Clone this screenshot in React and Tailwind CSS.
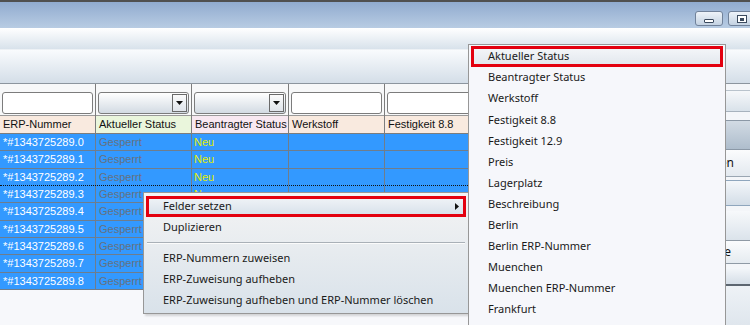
import React from "react";

const cols = [
  { w: "w-[96px]", label: "ERP-Nummer", bg: "bg-[#f9eadf]", kind: "input" },
  { w: "w-[96px]", label: "Aktueller Status", bg: "bg-[#eaf6dc]", kind: "combo" },
  { w: "w-[97px]", label: "Beantragter Status", bg: "bg-[#f8e8f1]", kind: "combo" },
  { w: "w-[96px]", label: "Werkstoff", bg: "bg-[#f9eadf]", kind: "input" },
  { w: "w-[200px]", label: "Festigkeit 8.8", bg: "bg-[#f9eadf]", kind: "input" },
];

const subItems = [
  "Aktueller Status",
  "Beantragter Status",
  "Werkstoff",
  "Festigkeit 8.8",
  "Festigkeit 12.9",
  "Preis",
  "Lagerplatz",
  "Beschreibung",
  "Berlin",
  "Berlin ERP-Nummer",
  "Muenchen",
  "Muenchen ERP-Nummer",
  "Frankfurt",
];

function FilterBox({ kind }) {
  if (kind === "combo") {
    return (
      <div className="flex-1 h-[22px] rounded-[3px] border border-[#7c7c7c] bg-gradient-to-b from-[#ffffff] to-[#d3dbe3] flex justify-end items-center pr-[1px]">
        <div className="w-[15px] h-[18px] border border-[#6a6a6a] bg-gradient-to-b from-[#fbfbfb] to-[#dfe4ea] flex items-center justify-center">
          <svg width="7" height="4" viewBox="0 0 7 4">
            <path d="M0 0h7L3.5 4z" fill="#111" />
          </svg>
        </div>
      </div>
    );
  }
  return <div className="flex-1 h-[22px] rounded-[3px] border border-[#7c7c7c] bg-white" />;
}

function WinButton({ children }) {
  return (
    <div className="w-[28px] h-[15px] shrink-0 rounded-[3px] border border-[#71829a] bg-gradient-to-b from-[#eef3f9] to-[#c4d2e2] flex items-end justify-center pb-[2px]">
      {children}
    </div>
  );
}

export default function App() {
  const rows = Array.from({ length: 9 }, (_, i) => i);
  return (
    <div className="relative w-[750px] h-[325px] overflow-hidden bg-[#f7f8fb] flex flex-col font-['Liberation_Sans',Arial,sans-serif]">
      {/* top frame */}
      <div className="h-[2px] shrink-0 bg-[#505050]" />
      <div className="h-[26px] shrink-0 bg-gradient-to-b from-[#91abcf] to-[#b8cce3] flex justify-end items-start pt-[9px] gap-[5px] -mr-[6px]">
        <WinButton>
          <div className="w-[10px] h-[4px] rounded-[1px] border border-[#3b4a5e] bg-white" />
        </WinButton>
        <WinButton>
          <div className="w-[10px] h-[8px] border border-[#3b4a5e] bg-white flex items-center justify-center">
            <div className="w-[4px] h-[3px] bg-[#3b4a5e]" />
          </div>
        </WinButton>
      </div>
      <div className="h-[22px] shrink-0 bg-gradient-to-b from-[#ffffff] to-[#d8e2eb] border-b border-[#edf1f5]" />
      <div className="h-[34px] shrink-0 bg-gradient-to-b from-[#f9fbfd] to-[#d4dee8] border-b border-[#8c959e]" />

      {/* main */}
      <div className="flex-1 flex min-h-0">
        <div className="flex-1 flex flex-col min-w-0 overflow-hidden">
          {/* header */}
          <div className="flex shrink-0 bg-[#f7f8f9]">
            {cols.map((c, i) => (
              <div key={i} className={`${c.w} shrink-0 flex flex-col border-r border-[#7d7d7d]`}>
                <div className="h-[31px] flex items-end px-[2px] pb-[1px]">
                  <FilterBox kind={c.kind} />
                </div>
                <div className={`h-[18px] ${c.bg} border-t border-[#9a9a9a] flex items-center pl-[3px] text-[11px] text-[#111] whitespace-nowrap`}>
                  {c.label}
                </div>
              </div>
            ))}
          </div>
          {/* rows */}
          <div className="flex flex-col border-t border-[#7d7d7d]">
            {rows.map((i) => (
              <div
                key={i}
                className={`flex h-[17.33px] shrink-0 bg-[#3399ff] border-b text-[11px] whitespace-nowrap ${
                  i === 2 ? "border-dotted border-[#111]" : "border-[#6f7d8b]"
                }`}
              >
                <div className="w-[96px] shrink-0 border-r border-[#6f7d8b] pl-[3px] flex items-center text-white">
                  *#1343725289.{i}
                </div>
                <div className="w-[96px] shrink-0 border-r border-[#6f7d8b] pl-[3px] flex items-center text-[#66717e]">
                  Gesperrt
                </div>
                <div className="w-[97px] shrink-0 border-r border-[#6f7d8b] pl-[2px] flex items-center text-[#e4ee00]">
                  Neu
                </div>
                <div className="w-[96px] shrink-0 border-r border-[#6f7d8b]" />
                <div className="w-[200px] shrink-0 border-r border-[#6f7d8b]" />
              </div>
            ))}
          </div>
        </div>

        {/* right side panel (mostly covered) */}
        <div className="w-[90px] shrink-0 flex flex-col border-l border-[#8c959e] bg-[#f4f6f9] text-[12px] text-[#111] font-['Noto_Sans',sans-serif] whitespace-nowrap">
          <div className="h-[7px] border-b border-[#b9c3cc]" />
          <div className="h-[21px] bg-gradient-to-b from-[#f6f8fa] to-[#d9e2ea] border-b border-[#a7b2bd]" />
          <div className="h-[8px]" />
          <div className="h-[30px] bg-gradient-to-b from-[#d2dbe4] to-[#aebdcc] border-y border-[#8b98a6]" />
          <div className="h-[27px] bg-gradient-to-b from-[#fbfcfd] to-[#e3e9ef] border-b border-[#9aa6b2] flex items-center justify-end pr-[16px]">
            Suchen
          </div>
          <div className="h-[3px]" />
          <div className="h-[26px] bg-gradient-to-b from-[#f4f7fa] to-[#d3dde7] border-y border-[#8fa6bd]" />
          <div className="h-[5px]" />
          <div className="h-[30px] bg-gradient-to-b from-[#f7f9fb] to-[#dbe3eb] border-b border-[#8f9aa5]" />
          <div className="h-[23px] bg-gradient-to-b from-[#fbfcfd] to-[#e5ebf0] border-b border-[#8f9aa5] flex items-center justify-end pr-[19px]">
            Speichere
          </div>
          <div className="h-[4px]" />
          <div className="h-[18px] bg-gradient-to-b from-[#f4f7fa] to-[#d5dee7] border-b-2 border-[#5c6670]" />
          <div className="flex-1 bg-gradient-to-b from-[#eef2f6] to-[#dfe6ed]" />
        </div>
      </div>

      {/* context menu */}
      <div className="absolute left-[143px] top-[192px] w-[326px] h-[122px] border border-[#979797] bg-gradient-to-b from-[#f4f4f4] to-[#d9e2ea] pt-[3px] px-[2px] flex flex-col text-[11px] text-[#1a1a1a] font-['Noto_Sans',sans-serif] shadow-[2px_2px_2px_rgba(0,0,0,0.15)]">
        <div className="h-[21px] shrink-0 border-[3px] border-[#e3000f] bg-gradient-to-b from-[#eef2f6] to-[#d9e2eb] flex items-center pl-[14px] pr-[4px]">
          <span className="flex-1">Felder setzen</span>
          <svg width="4" height="7" viewBox="0 0 4 7">
            <path d="M0 0l4 3.5L0 7z" fill="#111" />
          </svg>
        </div>
        <div className="h-[21px] shrink-0 border-[3px] border-transparent flex items-center pl-[14px]">Duplizieren</div>
        <div className="h-[10px] shrink-0 flex flex-col justify-center px-[1px]">
          <div className="h-[1px] bg-[#a9b0b7]" />
          <div className="h-[1px] bg-[#fbfbfb]" />
        </div>
        <div className="h-[21px] shrink-0 border-[3px] border-transparent flex items-center pl-[14px]">ERP-Nummern zuweisen</div>
        <div className="h-[21px] shrink-0 border-[3px] border-transparent flex items-center pl-[14px]">ERP-Zuweisung aufheben</div>
        <div className="h-[21px] shrink-0 border-[3px] border-transparent flex items-center pl-[14px] whitespace-nowrap">
          ERP-Zuweisung aufheben und ERP-Nummer löschen
        </div>
      </div>

      {/* submenu */}
      <div className="absolute left-[468px] top-[44px] w-[258px] h-[300px] border border-[#979797] bg-[#f6f7fb] pt-[1px] px-[2px] flex flex-col text-[11px] text-[#1a1a1a] font-['Noto_Sans',sans-serif]">
        {subItems.map((s, i) => (
          <div
            key={s}
            className={`h-[21.1px] shrink-0 border-[3px] flex items-center pl-[14px] whitespace-nowrap ${
              i === 0 ? "border-[#e3000f] bg-gradient-to-b from-[#f3f5f8] to-[#e3e8ee]" : "border-transparent"
            }`}
          >
            {s}
          </div>
        ))}
      </div>
    </div>
  );
}
